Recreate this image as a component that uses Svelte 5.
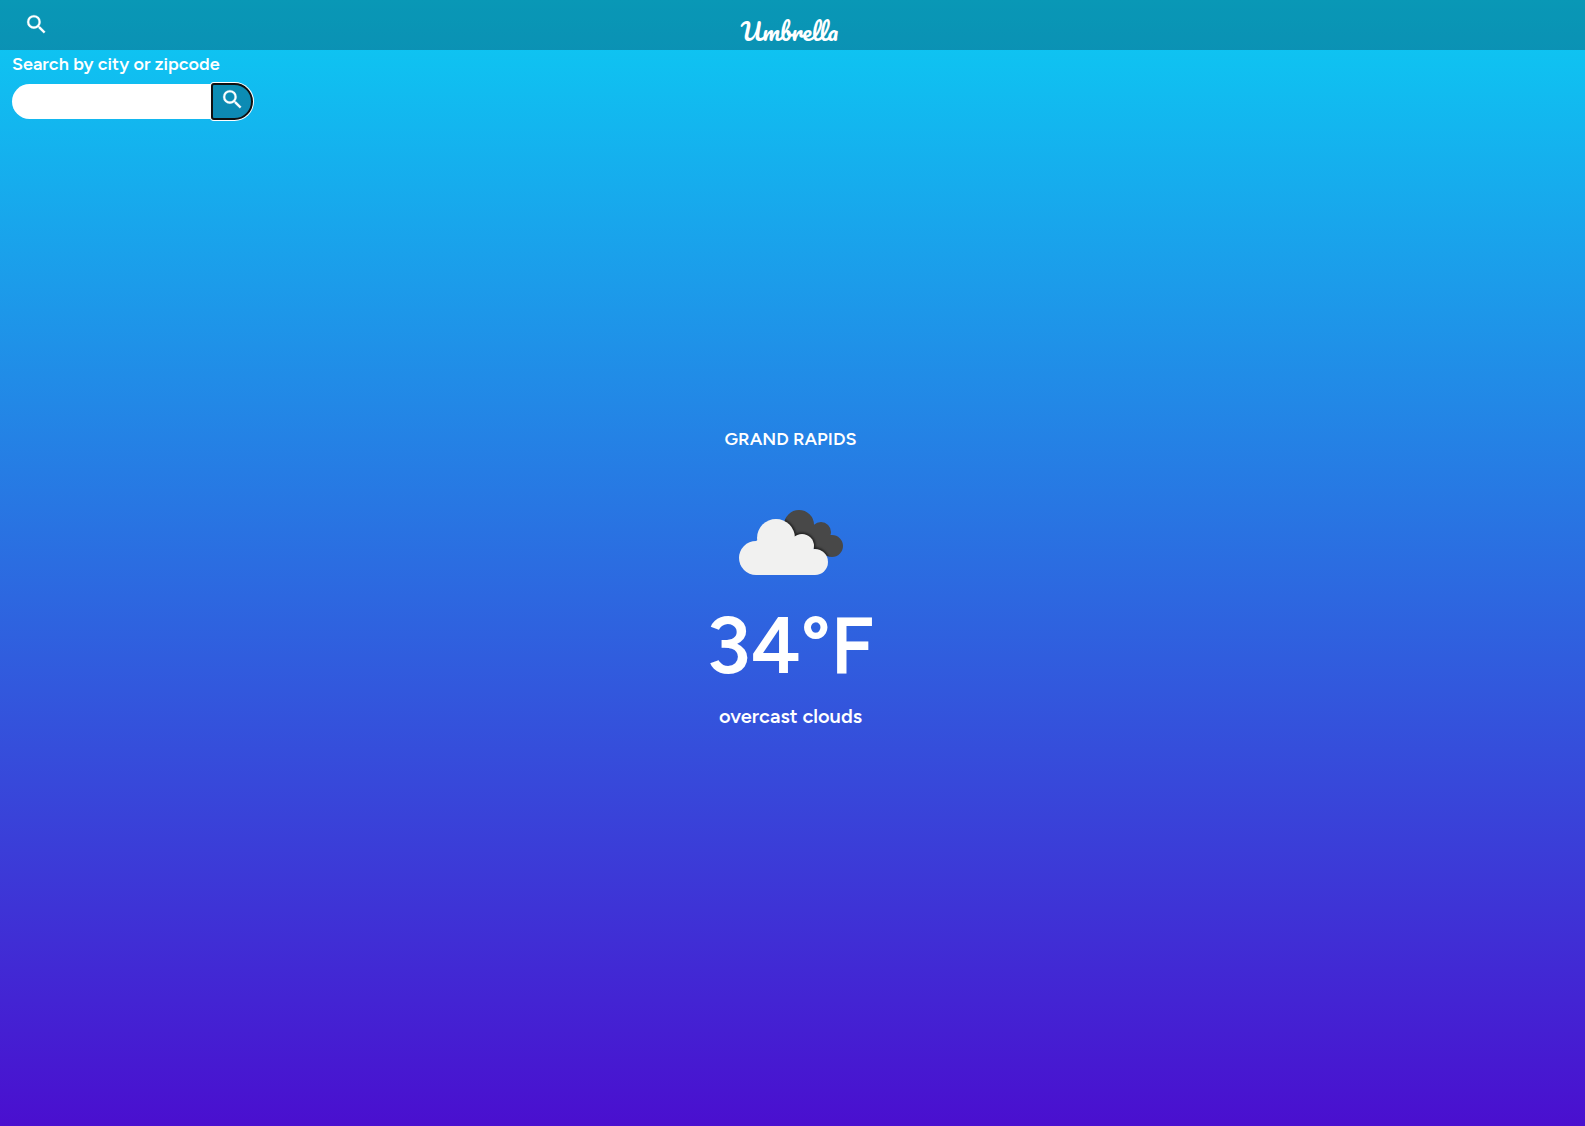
<script>
  let query = $state('');
  const weather = { city: 'GRAND RAPIDS', temperature: '34°F', description: 'overcast clouds' };
</script>

{#snippet magnifier()}
  <svg class="magnifier" viewBox="0 0 24 24" aria-hidden="true">
    <path d="M15.5 14h-.79l-.28-.27A6.47 6.47 0 0 0 16 9.500 6.500 6.500 0 1 0 9.500 16c1.610 0 3.090-.59 4.230-1.570l.27.28v.79l5 4.990L20.490 19l-4.990-5zm-6 0a4.500 4.500 0 1 1 0-9 4.500 4.500 0 0 1 0 9z" />
  </svg>
{/snippet}

{#snippet frontCloud()}
  <circle cx="17" cy="48" r="17" />
  <circle cx="37" cy="28" r="19" />
  <circle cx="63" cy="36" r="12" />
  <circle cx="76" cy="52" r="13" />
  <path d="M17 31L37 20L56 28L75 40L76 65H17Z" />
{/snippet}

<div class="app">
  <header>
    <button class="toggle" type="button" aria-label="Toggle search">{@render magnifier()}</button>
    <h1>Umbrella</h1>
  </header>

  <form onsubmit={(event) => event.preventDefault()}>
    <label for="place">Search by city or zipcode</label>
    <div class="field">
      <input id="place" type="text" bind:value={query} />
      <button class="submit" type="submit" aria-label="Search">{@render magnifier()}</button>
    </div>
  </form>

  <main>
    <h2>{weather.city}</h2>
    <svg class="clouds" viewBox="0 0 104 66" role="img" aria-label="Overcast clouds">
      <clipPath id="back-cloud">
        <circle cx="60" cy="15" r="15" />
        <circle cx="82" cy="22" r="10" />
        <circle cx="93" cy="36" r="11" />
        <path d="M48 20L72 14L88 26L93 47L84 45Z" />
      </clipPath>
      <g clip-path="url(#back-cloud)">
        <rect class="back" width="104" height="66" />
        <g class="shade">{@render frontCloud()}</g>
      </g>
      <g class="front">{@render frontCloud()}</g>
    </svg>
    <p class="temperature">{weather.temperature}</p>
    <p class="description">{weather.description}</p>
  </main>
</div>

<style>
  :global(body) {
    margin: 0;
  }

  .app {
    display: flex;
    flex-direction: column;
    min-height: 100vh;
    color: #fff;
    background: linear-gradient(#0ccbf3, #4a0fcf);
    font-family: Figtree, Lato, sans-serif;
    font-weight: 600;
  }

  header {
    display: grid;
    grid-template-columns: 1fr auto 1fr;
    height: 50px;
    padding: 0 18px 0 12px;
    background: rgb(0 0 0 / 25%);
  }

  h1,
  h2,
  p {
    margin: 0;
    font-weight: inherit;
  }

  h1 {
    padding-top: 14px;
    font-family: Pacifico, cursive;
    font-size: 24px;
    font-weight: 600;
    line-height: 34px;
  }

  button {
    display: grid;
    place-content: center;
    padding: 0;
    border: 0;
    color: inherit;
    background: none;
  }

  .toggle {
    width: 48px;
    height: 48px;
  }

  .magnifier {
    width: 25px;
    height: 25px;
    fill: currentColor;
    stroke: currentColor;
    stroke-width: 0.2;
  }

  form {
    padding: 2px 12px 0;
  }

  label {
    display: block;
    font-size: 18px;
    line-height: 24px;
  }

  .field {
    display: flex;
    height: 35px;
    padding-top: 8px;
  }

  input {
    box-sizing: border-box;
    width: 200px;
    padding: 0 16px;
    border: 0;
    border-radius: 18px 0 0 18px;
    background: #fff;
    font: inherit;
    outline: none;
  }

  .submit {
    width: 40px;
    padding-bottom: 4px;
    border-radius: 2px 18px 18px 2px;
    background: rgb(0 0 0 / 25%);
    outline: 2px solid #101010;
    outline-offset: -1px;
    box-shadow: 0 0 0 2px #fff;
  }

  main {
    display: flex;
    flex: 1;
    flex-direction: column;
    align-items: center;
    justify-content: center;
    padding: 0 4px 90px 0;
  }

  h2 {
    font-size: 18px;
    line-height: 24px;
  }

  .clouds {
    width: 104px;
    height: 66px;
    margin: 59px 0 21px;
  }

  .back {
    fill: #484848;
  }

  .shade {
    fill: #202020;
    stroke: #202020;
    stroke-width: 3;
    filter: blur(1px);
  }

  .front {
    fill: #f1f1f0;
  }

  .temperature {
    font-size: 80px;
    line-height: 96px;
  }

  .description {
    padding-top: 11px;
    font-size: 20px;
    line-height: 24px;
  }
</style>
